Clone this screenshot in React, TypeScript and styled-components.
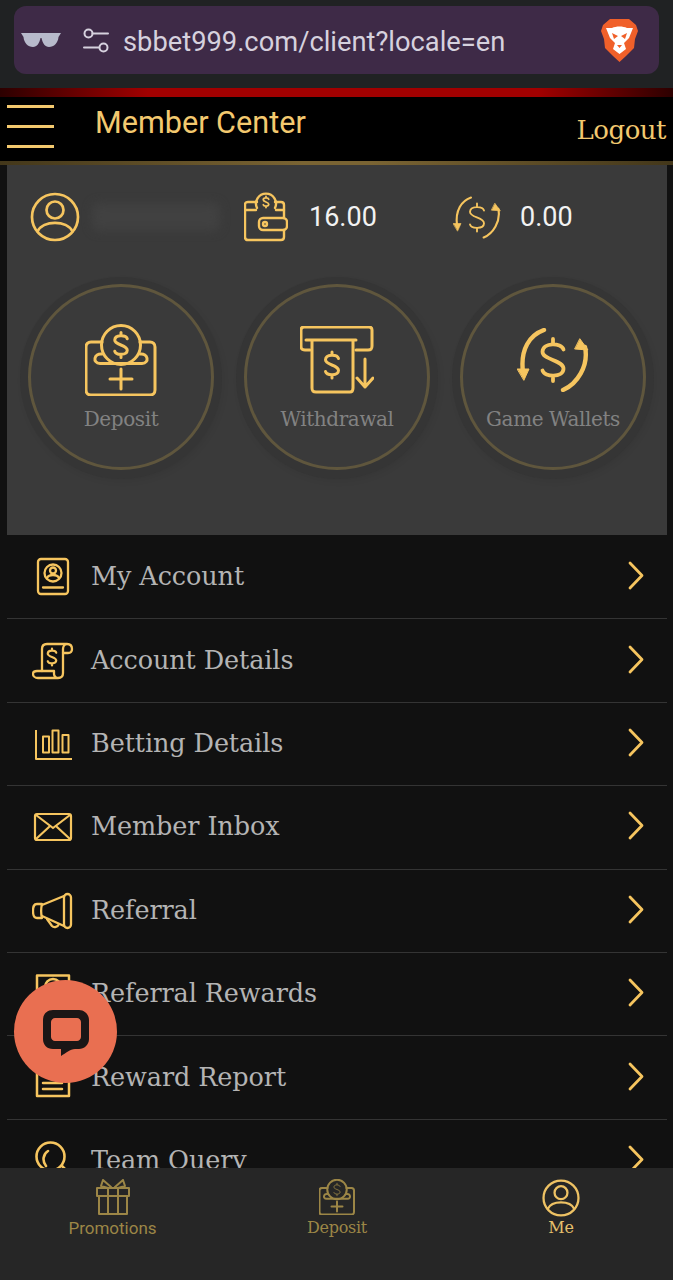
import React from "react";
import styled, { createGlobalStyle } from "styled-components";

const GOLD = "#f6c55f";

const Global = createGlobalStyle`
  html, body { margin: 0; padding: 0; background: #111; }
  * { box-sizing: border-box; }
`;

const Page = styled.div`
  position: relative;
  width: 673px;
  height: 1280px;
  overflow: hidden;
  display: flex;
  flex-direction: column;
  background: #111;
`;

const BrowserBar = styled.div`
  height: 88px;
  flex: none;
  padding: 6px 14px 14px;
  background: #202223;
`;

const UrlBox = styled.div`
  height: 68px;
  border-radius: 12px;
  background: #3e2a47;
  display: flex;
  align-items: center;
  padding: 0 21px 0 7px;
`;

const SliderSlot = styled.div`
  margin-left: 22px;
`;

const UrlText = styled.span`
  font: 400 27.3px "Roboto", sans-serif;
  color: #d6d1de;
  margin: 3px 0 0 14px;
  flex: 1;
`;

const RedBar = styled.div`
  height: 9px;
  flex: none;
  background: linear-gradient(90deg, #2c0000 0%, #a10000 22%, #a10000 80%, #2c0000 100%);
`;

const Header = styled.header`
  height: 64px;
  flex: none;
  background: #000;
  display: flex;
  align-items: center;
  padding: 0 7px;
`;

const Burger = styled.div`
  width: 47px;
  height: 43px;
  flex: none;
  display: flex;
  flex-direction: column;
  justify-content: space-between;
  margin-bottom: 6px;
  span { display: block; height: 3px; background: #f3c96f; }
`;

const Title = styled.h1`
  margin: 0 0 13px 41px;
  flex: 1;
  font: 400 30.6px "Roboto", sans-serif;
  color: #f3c96f;
`;

const Logout = styled.span`
  font: 400 26px "DejaVu Serif", serif;
  letter-spacing: -0.5px;
  color: #f3c96f;
  margin-top: 2px;
`;

const GoldLine = styled.div`
  height: 4px;
  flex: none;
  background: linear-gradient(90deg, #43371a 0%, #7a6433 45%, #7a6433 55%, #43371a 100%);
`;

const Main = styled.main`
  flex: 1;
  min-height: 0;
  overflow: hidden;
  padding: 0 6px 0 7px;
`;

const Panel = styled.section`
  height: 370px;
  background: #3a3a3a;
  padding: 27px 0 0 13px;
`;

const Stats = styled.div`
  display: grid;
  grid-template-columns: 214px 209px 1fr;
  height: 49px;
  padding-left: 10px;
`;

const Stat = styled.div`
  display: flex;
  align-items: center;
`;

const Blurred = styled.div`
  width: 128px;
  height: 28px;
  margin-left: 12px;
  background: #414141;
  border-radius: 8px;
  filter: blur(5px);
`;

const Amount = styled.span<{ $gap: number }>`
  margin-left: ${(p) => p.$gap}px;
  font: 400 27px "Roboto", sans-serif;
  color: #f2f2f2;
`;

const Actions = styled.div`
  display: grid;
  grid-template-columns: repeat(3, 202px);
  column-gap: 14px;
  margin-top: 36px;
`;

const Outer = styled.div`
  width: 202px;
  height: 202px;
  border-radius: 50%;
  background: #353535;
  box-shadow: 2px 3px 6px rgba(0, 0, 0, 0.05);
  display: flex;
  align-items: center;
  justify-content: center;
`;

const Ring = styled.div`
  width: 186px;
  height: 186px;
  margin-top: -2px;
  border-radius: 50%;
  border: 3px solid #5f563d;
  background: #3a3a3a;
  display: flex;
  flex-direction: column;
  align-items: center;
  padding-top: 36px;
`;

const ActionIcon = styled.div`
  height: 74px;
  display: flex;
  align-items: center;
`;

const ActionLabel = styled.span`
  margin-top: 10px;
  font: 400 20px "DejaVu Serif", serif;
  letter-spacing: -0.4px;
  color: #828282;
  white-space: nowrap;
`;

const RowList = styled.div`
  padding-top: 1px;
`;

const Row = styled.div`
  height: 83.4px;
  display: flex;
  align-items: center;
  padding: 0 22px 0 25px;
  border-bottom: 1px solid #343434;
`;

const RowIcon = styled.div`
  width: 42px;
  height: 40px;
  flex: none;
`;

const RowLabel = styled.span`
  flex: 1;
  margin: -2px 0 0 17px;
  font: 400 25.5px "DejaVu Serif", serif;
  letter-spacing: -0.1px;
  color: #b4b4b4;
`;

const ChevronSlot = styled.div`
  margin-top: -3px;
`;

const Nav = styled.nav`
  height: 112px;
  flex: none;
  background: #262626;
  display: grid;
  grid-template-columns: 225px 224px 224px;
  position: relative;
`;

const NavItem = styled.div`
  display: flex;
  flex-direction: column;
  align-items: center;
  padding-top: 11px;
`;

const NavIcon = styled.div`
  height: 38px;
`;

const NavLabel = styled.span<{ $active?: boolean; $serif?: boolean }>`
  margin-top: 1px;
  font: 400 ${(p) => (p.$serif ? 16 : 17)}px
    ${(p) => (p.$serif ? '"DejaVu Serif", serif' : '"Roboto", sans-serif')};
  letter-spacing: ${(p) => (p.$serif ? "-0.3px" : "0")};
  color: ${(p) => (p.$active ? "#e6c06c" : "#9c8646")};
`;

const Chat = styled.div`
  position: absolute;
  left: 14px;
  top: 980px;
  width: 103px;
  height: 103px;
  border-radius: 50%;
  background: #e96f51;
  display: flex;
  align-items: center;
  justify-content: center;
  padding-top: 3px;
`;

const Line = styled.svg<{ $color?: string; $w?: number }>`
  display: block;
  fill: none;
  stroke: ${(p) => p.$color || GOLD};
  stroke-width: ${(p) => p.$w || 2.3};
  stroke-linecap: round;
  stroke-linejoin: round;
`;

const Dollar = ({ x, y, s, w = 2.4 }: { x: number; y: number; s: number; w?: number }) => (
  <g transform={`translate(${x} ${y}) scale(${s})`}>
    <path
      d="M5 -5C4 -8.300 -4.800 -8.500 -5 -4C-5.200 0 5.200 0 5 4.200C4.800 8.500 -4 8.300 -5 5M0 -10V-8M0 8V10"
      strokeWidth={w / s}
    />
  </g>
);

const UserIcon = ({ size, color, w }: { size: number; color?: string; w?: number }) => (
  <Line width={size} height={size} viewBox="0 0 50 50" $color={color} $w={w || 2.7}>
    <circle cx="25" cy="25" r="23" />
    <circle cx="25" cy="18" r="8.500" />
    <path d="M7.500 39.500C13 28 37 28 42.500 39.500" />
  </Line>
);

const DepositIcon = ({ size, color, w, dw }: { size: number; color?: string; w?: number; dw?: number }) => (
  <Line width={size} height={size} viewBox="0 0 72 72" $color={color} $w={w || 3}>
    <path d="M17 18H6C3 18 1 20 1 23V66C1 69 3 71 6 71H65C68 71 70 69 70 66V23C70 20 68 18 65 18H55" />
    <circle cx="36" cy="21" r="19.500" />
    <Dollar x={36} y={21} s={1.25} w={dw || 3} />
    <path d="M17 30C9 29 7 39 15 39.500H57C65 39 63 29 55 30" />
    <path d="M36 45V65M25 55H47" />
  </Line>
);

const WalletIcon = () => (
  <Line width={44} height={50} viewBox="0 0 44 50" $w={2.4}>
    <path d="M13 10H4C2 10 1 11 1 13V45C1 47 2 48 4 48H37C39 48 40 47 40 45V38M40 26V13C40 11 39 10 37 10H31" />
    <path d="M1 18H12M32 18H40" />
    <path d="M13 16A10 10 0 1 1 31 16" />
    <Dollar x={22} y={10} s={0.55} w={1.8} />
    <rect x="15" y="26" width="28" height="12" rx="4" />
    <circle cx="21" cy="32" r="2" />
  </Line>
);

const SwapIcon = ({ width, height, w, dw }: { width: number; height: number; w: number; dw: number }) => (
  <Line width={width} height={height} viewBox="0 0 72 64" $w={w}>
    <path d="M27 2C13 7 3 21 6 44" />
    <path d="M0.500 41L12 41L7 52Z" fill={GOLD} strokeWidth={1} />
    <path d="M46 62C60 56 72 38 68 19" />
    <path d="M58 21L71 22L63 11Z" fill={GOLD} strokeWidth={1} />
    <Dollar x={36} y={32} s={2.1} w={dw} />
  </Line>
);

const AtmIcon = () => (
  <Line width={74} height={68} viewBox="0 0 74 68" $w={3}>
    <path d="M10 24H5C2 24 1 23 1 20V4C1 2 2 1 4 1H69C71 1 72 2 72 4V20C72 23 71 24 68 24H56" />
    <path d="M6 14H56M12 14V62C12 65 13 66 16 66H50C52 66 53 65 53 62V14" />
    <Dollar x={32} y={39} s={1.3} w={3} />
    <path d="M65 33V61M57 52L65 61L73 52" />
  </Line>
);

const Gift = () => (
  <Line width={34} height={36} viewBox="0 0 34 36" $color="#9c8646" $w={2}>
    <rect x="1" y="9" width="32" height="8" />
    <path d="M3 17V35H31V17M12 9V35M22 9V35" />
    <path d="M12 9L5 7L7 1L15 8M22 9L29 7L27 1L19 8" />
  </Line>
);

const Bubble = () => (
  <svg width="48" height="48" viewBox="0 0 48 48" style={{ display: "block" }}>
    <path
      d="M11 1H37C42 1 47 5 47 11V30C47 36 42 40 37 40H33C28 40 24 44 19 47V40H11C5 40 1 36 1 30V11C1 5 5 1 11 1ZM13 9C11 9 9 11 9 13V28C9 30 11 32 13 32H35C37 32 39 30 39 28V13C39 11 37 9 35 9Z"
      fill="#1b1616"
      fillRule="evenodd"
    />
  </svg>
);

const IdCard = () => (
  <Line width={42} height={40} viewBox="0 0 42 40">
    <rect x="6" y="2" width="30" height="35" rx="3" />
    <circle cx="21" cy="16" r="8.500" />
    <circle cx="21" cy="13.500" r="3" />
    <path d="M15 21C17 17 25 17 27 21" />
    <path d="M11 30.500H31" />
  </Line>
);

const Scroll = () => (
  <Line width={42} height={40} viewBox="0 0 42 40">
    <path d="M10 30V8C10 5 12 3 15 3H35C38 3 40 5 40 8C40 11 38 12 36 12H31V8C31 5 33 3 35 3" />
    <path d="M31 12V32C31 35 29 37 26 37H6C3 37 1 35 1 33C1 31 2 30 5 30H22V33C22 35 24 37 26 37" />
    <Dollar x={20} y={16} s={0.85} w={2.2} />
  </Line>
);

const Bars = () => (
  <Line width={42} height={40} viewBox="0 0 42 40" $w={2}>
    <path d="M4 6V35H40" strokeLinecap="butt" />
    <rect x="11" y="12.500" width="6" height="16" />
    <rect x="20.500" y="6.500" width="6" height="22" />
    <rect x="30.500" y="11" width="6" height="17.500" />
  </Line>
);

const Mail = () => (
  <Line width={42} height={40} viewBox="0 0 42 40" $w={2.2}>
    <rect x="3" y="7" width="36" height="26" rx="2" />
    <path d="M4 8L21 21L38 8M4 32L17 20M38 32L25 20" />
  </Line>
);

const Horn = () => (
  <Line width={42} height={40} viewBox="0 0 42 40">
    <path d="M10 14L32 5M10 25L32 35" />
    <rect x="32" y="3" width="7" height="34" rx="3.500" />
    <path d="M10 13H5C2 13 1 15 1 20C1 25 2 27 5 27H10C9 23 9 17 10 13Z" />
    <path d="M15 28L20 35C22 37 26 36 27 33" />
  </Line>
);

const Doc = () => (
  <Line width={42} height={40} viewBox="0 0 42 40" $w={2.5}>
    <rect x="5" y="1.500" width="32" height="36.500" />
    <circle cx="21" cy="13" r="8" />
    <path d="M11 25H30M11 31H30" />
  </Line>
);

const Search = () => (
  <Line width={42} height={40} viewBox="0 0 42 40" $w={2.6}>
    <circle cx="18.500" cy="15.500" r="14" />
    <path d="M30 25L35 30M16 10C11 13 10 20 14 25" />
  </Line>
);

const Chevron = () => (
  <Line width={17} height={29} viewBox="0 0 17 29" $w={2.8}>
    <path d="M2 2L14 14.500L2 27" />
  </Line>
);

const Brave = () => (
  <svg width="37" height="44" viewBox="0 0 37 44" style={{ display: "block" }}>
    <path d="M9 1H28L35 7L37 13L34 21L33 30L25 38L18.500 44L12 38L4 30L3 21L0 13L2 7Z" fill="#f0602a" />
    <path d="M11 10C15 8 22 8 26 10L32 10L28 20L23 25L25 31L18.500 36L12 31L14 25L9 20L5 10Z" fill="#fff" />
    <path d="M11 15L17 18L13 21ZM26 15L20 18L24 21ZM16 27H21L18.500 30Z" fill="#f0602a" />
  </svg>
);

const Glasses = () => (
  <svg width="40" height="16" viewBox="0 0 40 16" style={{ display: "block" }}>
    <path d="M0 1H40L37.500 5C37 11 33 15 28 15C24 15 21.500 11 20.500 6H19.500C18.500 11 16 15 12 15C7 15 3 11 2.500 5Z" fill="#b7bacb" />
  </svg>
);

const Sliders = () => (
  <Line width={26} height={25} viewBox="0 0 26 25" $color="#d6d1de" $w={2}>
    <circle cx="5.500" cy="5.500" r="4" />
    <path d="M9.500 5.500H25M1 19.500H16" />
    <circle cx="20.500" cy="19.500" r="4" />
  </Line>
);

const rows: { label: string; icon: React.ReactNode }[] = [
  { label: "My Account", icon: <IdCard /> },
  { label: "Account Details", icon: <Scroll /> },
  { label: "Betting Details", icon: <Bars /> },
  { label: "Member Inbox", icon: <Mail /> },
  { label: "Referral", icon: <Horn /> },
  { label: "Referral Rewards", icon: <Doc /> },
  { label: "Reward Report", icon: <Doc /> },
  { label: "Team Query", icon: <Search /> },
];

export default function App() {
  return (
    <Page>
      <Global />
      <BrowserBar>
        <UrlBox>
          <Glasses />
          <SliderSlot>
            <Sliders />
          </SliderSlot>
          <UrlText>sbbet999.com/client?locale=en</UrlText>
          <Brave />
        </UrlBox>
      </BrowserBar>
      <RedBar />
      <Header>
        <Burger>
          <span />
          <span />
          <span />
        </Burger>
        <Title>Member Center</Title>
        <Logout>Logout</Logout>
      </Header>
      <GoldLine />
      <Main>
        <Panel>
          <Stats>
            <Stat>
              <UserIcon size={50} />
              <Blurred />
            </Stat>
            <Stat>
              <WalletIcon />
              <Amount $gap={21}>16.00</Amount>
            </Stat>
            <Stat>
              <SwapIcon width={48} height={43} w={3.2} dw={2.8} />
              <Amount $gap={19}>0.00</Amount>
            </Stat>
          </Stats>
          <Actions>
            <Outer>
              <Ring>
                <ActionIcon>
                  <DepositIcon size={72} />
                </ActionIcon>
                <ActionLabel>Deposit</ActionLabel>
              </Ring>
            </Outer>
            <Outer>
              <Ring>
                <ActionIcon>
                  <AtmIcon />
                </ActionIcon>
                <ActionLabel>Withdrawal</ActionLabel>
              </Ring>
            </Outer>
            <Outer>
              <Ring>
                <ActionIcon>
                  <SwapIcon width={72} height={64} w={4.4} dw={3.8} />
                </ActionIcon>
                <ActionLabel>Game Wallets</ActionLabel>
              </Ring>
            </Outer>
          </Actions>
        </Panel>
        <RowList>
          {rows.map((r) => (
            <Row key={r.label}>
              <RowIcon>{r.icon}</RowIcon>
              <RowLabel>{r.label}</RowLabel>
              <ChevronSlot>
                <Chevron />
              </ChevronSlot>
            </Row>
          ))}
        </RowList>
      </Main>
      <Nav>
        <NavItem>
          <NavIcon>
            <Gift />
          </NavIcon>
          <NavLabel>Promotions</NavLabel>
        </NavItem>
        <NavItem>
          <NavIcon>
            <DepositIcon size={36} color="#9c8646" w={4} dw={1.6} />
          </NavIcon>
          <NavLabel $serif>Deposit</NavLabel>
        </NavItem>
        <NavItem>
          <NavIcon>
            <UserIcon size={38} color="#eec264" w={3} />
          </NavIcon>
          <NavLabel $serif $active>
            Me
          </NavLabel>
        </NavItem>
      </Nav>
      <Chat>
        <Bubble />
      </Chat>
    </Page>
  );
}
